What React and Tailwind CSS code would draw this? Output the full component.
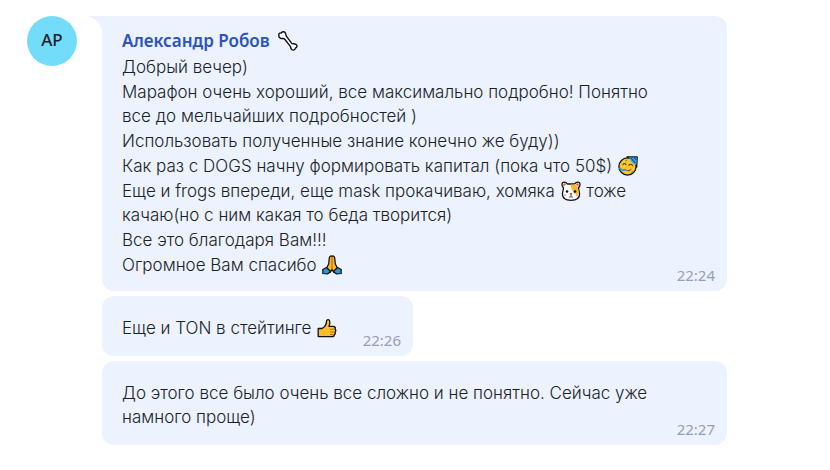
import React from "react";

const Bone = () => (
  <svg viewBox="0 0 20 20" className="w-5 h-5 shrink-0" fill="#fff" stroke="#111" strokeWidth="1.4" strokeLinejoin="round">
    <path d="M1 4.800C.2 3 1.700 1.500 3.400 2 3.800.5 6.200.2 7.300 1.800 8.100 3 7.700 4.300 8.500 5.300L13.600 12.200C14.600 13.200 16.300 12.400 17.900 13.400 19.600 14.500 19.100 16.700 17.500 17 17.300 18.900 15.200 19.700 13.800 18.500 12.500 17.300 12.900 16 12 14.900L6.500 8C5.500 7 4.200 7.900 2.700 7.300 1.400 6.800.6 5.900 1 4.800Z" />
  </svg>
);

const Party = () => (
  <svg viewBox="0 0 20 20" className="inline-block w-5 h-5 mx-px align-[-4px]">
    <path d="M9 1H19.200L18.700 11Z" fill="#3faee6" stroke="#111" strokeWidth="1.300" strokeLinejoin="round" />
    <circle cx="9.500" cy="10.500" r="8.600" fill="#fbc52f" stroke="#111" strokeWidth="1.300" />
    <path d="M11 1.500H18.800L18.300 9C15.500 8.500 12 5.500 11 1.500Z" fill="#3faee6" />
    <path d="M13 2L17.500 7M16 1.500L18.700 4" stroke="#1c568d" strokeWidth="1.200" />
    <path d="M5 8.500Q6.500 6.500 8 8.500M11 9Q13 7.300 14.500 9.500" fill="none" stroke="#553817" strokeWidth="1.200" strokeLinecap="round" />
    <path d="M6.500 13Q10 15.500 14 12.500Q11 17.500 6.500 13Z" fill="#6b3720" />
    <path d="M1.500 12Q3.500 15 8 13.800" fill="none" stroke="#2f9fcf" strokeWidth="2" />
    <path d="M7.500 4.500H9M13.500 16H15" stroke="#49a446" strokeWidth="1.600" />
  </svg>
);

const Hamster = () => (
  <svg viewBox="0 0 20 20" className="inline-block w-5 h-5 mx-px align-[-4px]">
    <path d="M2.500 7C0 4 .8 1.200 3 1.200 4.600 1.200 5.800 2 6.500 3H13.500C14.200 2 15.400 1.200 17 1.200 19.200 1.200 20 4 17.500 7L18.600 13C18.600 17.500 15.500 19.300 10 19.300S1.400 17.500 1.400 13Z" fill="#fff" stroke="#111" strokeWidth="1.300" strokeLinejoin="round" />
    <path d="M9.500 3.600H13.500Q17 4.500 17.200 8L18 13Q15.500 14.500 13 12Q10 9 9.500 3.600Z" fill="#f7b92f" />
    <path d="M2.500 5.500Q1.500 2.200 3.500 2.300L5.500 3.300ZM17.500 5.500Q18.500 2.200 16.500 2.300L14.500 3.300Z" fill="#ee6461" />
    <circle cx="6" cy="10.500" r="1.300" fill="#111" />
    <circle cx="14" cy="10.500" r="1.300" fill="#111" />
    <path d="M9 12.500H11L10 13.800Z" fill="#d64a54" stroke="#d64a54" />
    <path d="M10 13.500V15.500M8 16Q9 16.500 10 15.500Q11 16.500 12 16" fill="none" stroke="#333" strokeWidth=".8" />
    <path d="M2.800 14H5M15 14H17.200" stroke="#f2a3a1" strokeWidth="1.600" />
  </svg>
);

const Pray = () => (
  <svg viewBox="0 0 20 20" className="inline-block w-5 h-5 mx-px align-[-4px]">
    <path d="M10 1.300C8.700.5 7.500 1.300 7.300 3L6.700 9 4.500 13 8 17.500 10 14.500 12 17.500 15.500 13 13.300 9 12.700 3C12.500 1.300 11.300.5 10 1.300Z" fill="#fbb92b" stroke="#111" strokeWidth="1.300" strokeLinejoin="round" />
    <path d="M4.500 12.500L.8 14.500V18.500L5.500 19 8.700 16.500ZM15.500 12.500L19.200 14.500V18.500L14.500 19 11.300 16.500Z" fill="#2e94d6" stroke="#111" strokeWidth="1.200" strokeLinejoin="round" />
    <path d="M10 2V14" stroke="#a8620d" strokeWidth="1" fill="none" />
  </svg>
);

const ThumbsUp = () => (
  <svg viewBox="0 0 20 20" className="inline-block w-5 h-5 mx-px align-[-4px]">
    <path d="M1.200 10.500H5C7.500 9 9.500 6 9.500 3.200 9.700.9 12.900 1 12.900 4.200 12.900 6 12.500 7.200 12 8.300H16C18 8.300 18.800 9.700 18.100 11 19 12 18.800 13.300 18.100 14 18.600 15.200 18.200 16.200 17.300 16.700 17.300 18 16.500 18.600 15 18.600H1.200Z" fill="#fbbd2d" stroke="#111" strokeWidth="1.300" strokeLinejoin="round" />
    <path d="M13 11.200H17.500M13 14H17.500M13 16.500H16.500" stroke="#b36b12" strokeWidth=".9" />
  </svg>
);

const Tail = () => (
  <svg viewBox="0 0 16 16" className="absolute right-full top-0 w-4 h-4" fill="#ecf2fe">
    <path d="M0 0H16V16C15 7 8 1 0 0Z" />
  </svg>
);

const Bubble = ({ className = "", time, children }) => (
  <article className={`relative rounded-xl bg-[#ecf2fe] pl-5 pr-3 ${className}`}>
    {children}
    <time className="absolute right-3 bottom-1 font-['Noto_Sans',sans-serif] text-[15px] leading-6 font-normal text-[#949eb8]">{time}</time>
  </article>
);

const App = () => {
  return (
    <main className="min-h-screen bg-white font-['Inter','Noto_Sans',sans-serif] text-[17px] leading-6 font-light text-[#1b1f27]">
      <div className="flex items-start gap-[25px] pl-[27px] pr-5 py-4">
        <div className="flex w-[50px] h-[50px] shrink-0 items-center justify-center rounded-full bg-[#72dcfa] pb-0.5 font-['Noto_Sans',sans-serif] text-[17px] font-medium">
          АР
        </div>

        <div className="flex flex-1 flex-col items-start gap-[5px] max-w-[625px]">
          <Bubble className="w-full rounded-tl-none pt-[13px] pb-3.5" time="22:24">
            <Tail />
            <header className="flex items-center gap-2 pb-0.5">
              <h1 className="font-['Noto_Sans',sans-serif] font-semibold text-[#2b55bd]">Александр Робов</h1>
              <Bone />
            </header>
            <div className="flex flex-col gap-px">
              <p>Добрый вечер)</p>
              <p>
                Марафон очень хороший, все максимально подробно! Понятно
                <br />
                все до мельчайших подробностей )
              </p>
              <p>Использовать полученные знание конечно же буду))</p>
              <p>
                Как раз с DOGS начну формировать капитал (пока что 50$) <Party />
              </p>
              <p>
                Еще и frogs впереди, еще mask прокачиваю, хомяка <Hamster /> тоже
                <br />
                качаю(но с ним какая то беда творится)
              </p>
              <p>Все это благодаря Вам!!!</p>
              <p>
                Огромное Вам спасибо <Pray />
              </p>
            </div>
          </Bubble>

          <Bubble className="w-[311px] pt-5 pb-4" time="22:26">
            <p>
              Еще и TON в стейтинге <ThumbsUp />
            </p>
          </Bubble>

          <Bubble className="w-full pt-5 pb-4" time="22:27">
            <p>
              До этого все было очень все сложно и не понятно. Сейчас уже
              <br />
              намного проще)
            </p>
          </Bubble>
        </div>
      </div>
    </main>
  );
};

export default App;
